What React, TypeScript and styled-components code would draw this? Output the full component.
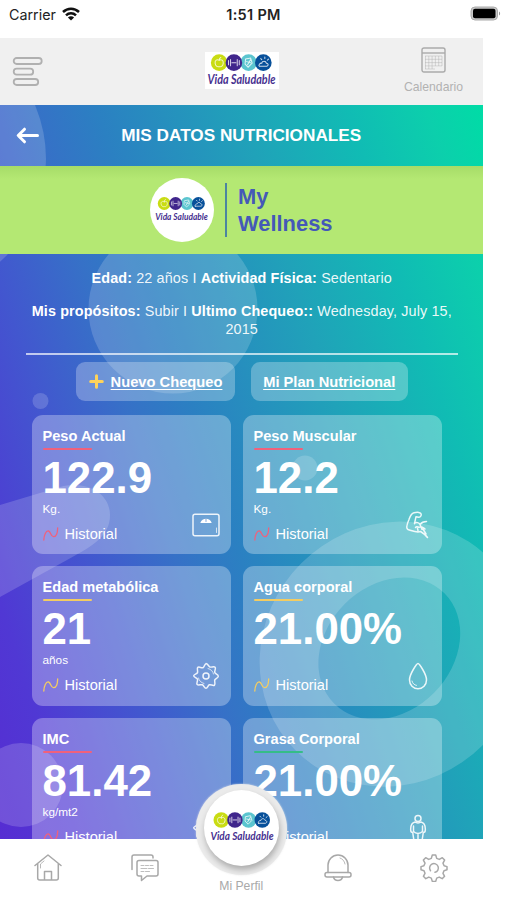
import React from "react";
import styled, { createGlobalStyle } from "styled-components";

const GlobalStyle = createGlobalStyle`
  * { box-sizing: border-box; }
  body { margin: 0; background: #fff; font-family: "Liberation Sans", Arial, sans-serif; }
  svg { display: block; flex: none; }
`;

const Screen = styled.div`
  width: 507px;
  height: 900px;
  overflow: hidden;
  display: flex;
  flex-direction: column;
  background: #fff;
`;

const StatusBar = styled.header`
  height: 38px;
  padding: 0 6px 10px 9px;
  display: grid;
  grid-template-columns: 1fr auto 1fr;
  align-items: center;
  font-family: Inter, "Liberation Sans", sans-serif;
  font-size: 14.3px;
  color: #222;
`;

const Carrier = styled.div`
  display: flex;
  align-items: center;
  gap: 6px;
`;

const Clock = styled.div`
  font-weight: 600;
  font-size: 14.5px;
  letter-spacing: 0.3px;
  margin-right: 3px;
`;

const Battery = styled.div`
  justify-self: end;
  margin-top: -2px;
`;

const AppFrame = styled.div`
  width: 482.5px;
  flex: 1;
  display: flex;
  flex-direction: column;
  min-height: 0;
`;

const TopBar = styled.div`
  height: 67px;
  flex: none;
  background: #f0f0f0;
  display: grid;
  grid-template-columns: 1fr auto 1fr;
  align-items: center;
  padding: 0 19px 0 12px;
`;

const LogoBox = styled.div`
  width: 74px;
  height: 37px;
  margin: -2px 0 0 8px;
  background: #fff;
  display: grid;
  place-items: center;
`;

const CalendarButton = styled.div`
  justify-self: end;
  width: 60px;
  display: flex;
  flex-direction: column;
  align-items: center;
  gap: 6px;
  margin-top: -1px;
  font-size: 12.2px;
  line-height: 16px;
  color: #b2b2b2;
`;

const Content = styled.main`
  position: relative;
  isolation: isolate;
  height: 734px;
  flex: none;
  overflow: hidden;
  display: flex;
  flex-direction: column;
  background: linear-gradient(
    72.3deg,
    #562dd2 0%,
    #5038d4 10.5%,
    #4257cf 25%,
    #3671c7 37%,
    #2b80c2 46%,
    #20a2b9 66%,
    #10bcb4 81%,
    #0ccfac 92%,
    #00dca6 100%
  );
`;

const Backdrop = styled.svg`
  position: absolute;
  inset: 0;
  z-index: -1;
`;

const TitleBar = styled.div`
  height: 61px;
  flex: none;
  display: grid;
  grid-template-columns: 26px 1fr 26px;
  align-items: center;
  padding: 0 15px;
`;

const Title = styled.h1`
  margin: 0;
  text-align: center;
  font-size: 17.2px;
  font-weight: 700;
  color: #fff;
  white-space: nowrap;
`;

const Banner = styled.div`
  height: 88px;
  flex: none;
  display: flex;
  align-items: center;
  padding-left: 149.5px;
  background: linear-gradient(#a6dc68 0, #b4e873 13px, #b4e873 100%);
`;

const RoundLogo = styled.div`
  width: 64px;
  height: 64px;
  border-radius: 50%;
  background: #fff;
  display: grid;
  place-items: center;
`;

const Divider = styled.div`
  width: 1.5px;
  height: 54px;
  margin: 0 11.5px 0 11.5px;
  background: #4c85a0;
`;

const Brand = styled.div`
  width: 110px;
  font-size: 21.9px;
  line-height: 27px;
  font-weight: 700;
  color: #4459b8;
`;

const Info = styled.section`
  height: 100.5px;
  flex: none;
  margin: 0 24.5px 0 25.5px;
  padding-top: 15px;
  border-bottom: 2px solid rgba(255, 255, 255, 0.68);
  text-align: center;
  color: rgba(255, 255, 255, 0.93);
  font-size: 14.4px;
  line-height: 18px;
  white-space: nowrap;
`;

const InfoLine = styled.p`
  margin: 0 0 15px;
  letter-spacing: 0.12px;
  b { color: #fff; }
`;

const Actions = styled.div`
  display: flex;
  gap: 16px;
  padding: 7.5px 0 0 76px;
  height: 60.5px;
  flex: none;
`;

const ActionButton = styled.a<{ $width: number }>`
  width: ${(p) => p.$width}px;
  height: 38.5px;
  border-radius: 9px;
  background: rgba(255, 255, 255, 0.27);
  display: flex;
  align-items: center;
  justify-content: center;
  gap: 7px;
  color: #fff;
  font-size: 14.7px;
  font-weight: 700;
  white-space: nowrap;
`;

const ActionText = styled.span`
  position: relative;
  top: 1px;
  text-decoration: underline;
  text-decoration-thickness: 1px;
  text-underline-offset: 2px;
`;

const Cards = styled.div`
  display: grid;
  grid-template-columns: 199px 199px;
  grid-auto-rows: 139.3px;
  gap: 12.2px 12px;
  padding-left: 31.5px;
`;

const Card = styled.article`
  border-radius: 11px;
  background: rgba(255, 255, 255, 0.3);
  padding: 12px 10px 0 11px;
  color: #fff;
  display: flex;
  flex-direction: column;
`;

const CardTitle = styled.h2`
  margin: 0;
  font-size: 14.6px;
  line-height: 18px;
  font-weight: 700;
  white-space: nowrap;
`;

const Accent = styled.div<{ $color: string }>`
  width: 49px;
  height: 2.4px;
  margin-top: 2.6px;
  flex: none;
  border-radius: 1px;
  background: ${(p) => p.$color};
`;

const Value = styled.div`
  font-size: 43.8px;
  line-height: 50px;
  height: 51px;
  margin-top: 3px;
  font-weight: 700;
`;

const Unit = styled.div`
  font-size: 11.8px;
  line-height: 14px;
  height: 14px;
  margin-top: -2px;
`;

const CardFooter = styled.div`
  display: flex;
  justify-content: space-between;
  align-items: flex-start;
`;

const History = styled.a`
  display: flex;
  align-items: center;
  gap: 6px;
  height: 18px;
  margin-top: 9px;
  font-size: 14.6px;
  line-height: 18px;
`;

const NavBar = styled.nav`
  position: relative;
  height: 61px;
  flex: none;
  display: grid;
  grid-template-columns: repeat(5, 1fr);
  justify-items: center;
  padding-top: 15px;
  background: #fff;
`;

const NavLabel = styled.span`
  align-self: end;
  font-size: 12.2px;
  line-height: 14px;
  padding-bottom: 7px;
  color: #a9a9a9;
`;

const ProfileRing = styled.div`
  position: absolute;
  left: 196px;
  top: -55px;
  width: 91px;
  height: 91px;
  border-radius: 50%;
  background: #ebebeb;
  box-shadow: 0 0 2px rgba(235, 235, 235, 0.9);
  padding: 5.5px 8px;
`;

const ProfileButton = styled.div`
  width: 75px;
  height: 76px;
  border-radius: 50%;
  background: #fff;
  box-shadow: 1px 4px 6px rgba(0, 0, 0, 0.27);
  display: grid;
  place-items: center;
`;

const Logo = ({ width }: { width: number }) => (
  <svg width={width} height={width * 0.5} viewBox="0 0 70 35" overflow="visible">
    <circle cx="13" cy="9.5" r="8.2" fill="#c9dc13" />
    <circle cx="42" cy="9.5" r="8.2" fill="#5bc5cf" />
    <circle cx="27.5" cy="9.5" r="8.2" fill="#40268c" />
    <circle cx="56.5" cy="9.5" r="8.2" fill="#07509a" />
    <g transform="translate(0 .5)" fill="none" stroke="#fff" strokeWidth="1" strokeLinecap="round" opacity="0.8">
      <path d="M13 6.800c-2-1.500-4.500 0-4 2.800.4 2.600 2 4 4 3.400 2 .6 3.800-.8 4-3.400.3-2.800-2-4.300-4-2.800ZM13 6.500c0-1.500.6-2.200 1.600-2.600" />
      <path d="M25.500 9h4M24.200 6v6M22.200 7v4M30.800 6v6M32.800 7v4" />
      <path d="M39 5.500l5-1 1.500 5-4 4-3-3ZM40 8l4 1M41 11l3-5" />
      <path d="M52.500 12.500h7.500c2-.6 1.500-3-.5-3-.6-2.500-4-2.500-4.500 0-2-.2-3.500 2.200-2.500 3ZM55 6l-1-1M58 5V3.500M60.500 6.500l1.200-1" />
    </g>
    <text
      x="1.500"
      y="31"
      fontFamily='"Lato", "Liberation Sans", sans-serif'
      fontStyle="italic"
      fontWeight="700"
      fontSize="12.200"
      fill="#46308f"
      textLength="67"
      lengthAdjust="spacingAndGlyphs"
    >
      Vida Saludable
    </text>
  </svg>
);

const WifiIcon = () => (
  <svg width="18" height="14" viewBox="0 0 18 14" fill="none" stroke="#111" strokeWidth="2.500">
    <path d="M1 5C5.600.6 12.400.6 17 5M4 8.300c2.800-2.700 7.200-2.700 10 0" />
    <path d="M9 13.400 5.900 10.400c1.700-1.600 4.500-1.600 6.200 0Z" fill="#111" stroke="none" />
  </svg>
);

const BatteryIcon = () => (
  <svg width="31" height="15" viewBox="0 0 31 15">
    <rect x="1" y="1" width="26.500" height="13" rx="4" fill="#c9c9c9" stroke="#aaa" strokeWidth="1" />
    <rect x="3" y="2.800" width="22.500" height="9.400" rx="2" fill="#000" />
    <path d="M29 5.500v4c1.500-.5 1.500-3.500 0-4Z" fill="#999" />
  </svg>
);

const MenuIcon = () => (
  <svg width="31" height="30" viewBox="0 0 31 30" fill="none" stroke="#b0b0b0" strokeWidth="1.800">
    <rect x="1.700" y="1" width="28" height="6" rx="3" />
    <rect x="1.700" y="11.700" width="19.500" height="6" rx="3" />
    <rect x="1.700" y="22" width="24.500" height="6" rx="3" />
  </svg>
);

const CalendarIcon = () => (
  <svg width="25" height="26" viewBox="0 0 25 26" fill="none" stroke="#aaa">
    <rect x="1" y="1" width="23" height="24" rx="2" strokeWidth="1.400" />
    <path d="M1 6h23" strokeWidth="1.400" />
    <path d="M4 9h17M4 12.300h17M4 15.600h17M4 18.900h17M4 22h10M4.500 9v13M7.800 9v13M11.100 9v13M14.400 9v10M17.700 9v10M21 9v10" strokeWidth=".6" opacity=".7" />
  </svg>
);

const BackIcon = () => (
  <svg width="26" height="20" viewBox="0 0 26 20" fill="none" stroke="#fff" strokeWidth="3" strokeLinecap="round" strokeLinejoin="round">
    <path d="M22.500 9.500H3.500M9.500 3.200 3.200 9.500l6.300 6.300" />
  </svg>
);

const TrendIcon = ({ color }: { color: string }) => (
  <svg width="16" height="14" viewBox="0 0 16 14" fill="none" stroke={color} strokeWidth="1.300" strokeLinecap="round" strokeLinejoin="round">
    <path d="M.8 13C1 8 3 3.500 5.500 4c2.500.6 2 5.500 5 5.700C13.500 9.900 14.500 6 14.700 1" />
  </svg>
);

const PlusIcon = () => (
  <svg width="15" height="15" viewBox="0 0 15 15" stroke="#ffd35a" strokeWidth="3" strokeLinecap="round">
    <path d="M7.500 1.700v11.600M1.700 7.500h11.600" />
  </svg>
);

type IconName = "scale" | "arm" | "gear" | "drop" | "body";

const GEAR =
  "M14 1.500c1.700 0 2.400 2.900 3.900 3.500s4-.9 5.200.3-.9 3.700-.3 5.200 3.500 2 3.500 3.700-2.900 2.200-3.500 3.700.9 4-.3 5.200-3.700-.9-5.200-.3-1.700 3.500-3.300 3.500-2.100-2.900-3.600-3.500-4 .9-5.200-.3.900-3.700.3-5.200-3.800-1.900-3.800-3.500 3.200-1.700 3.800-3.200-.9-4 .3-5.200 3.700.9 5.200.3 1.400-3.700 3-3.700Z";

const CardIcon = ({ name }: { name: IconName }) => (
  <svg width="28" height="28" viewBox="0 0 28 28" fill="none" stroke="#fff" strokeOpacity=".88" strokeWidth="1.500" strokeLinecap="round" strokeLinejoin="round">
    {name === "scale" && (
      <>
        <rect x="1" y="3.300" width="26" height="21.500" rx="2" />
        <path d="M8.300 12c1.800-5.600 9.600-5.600 11.400 0Z" fill="#fff" stroke="none" />
        <path d="M14 8v2.500" stroke="#759bd5" strokeWidth="1" />
        <path d="M24.500 17v4.500" strokeWidth=".8" />
      </>
    )}
    {name === "arm" && (
      <path d="M24.500 26.500c-1.800-3-4.500-4.500-7-6-4 1.500-7.500-.5-12.500-2C2.800 17.500 4 13 6 8.500 7.200 5 8 2.300 11 1.700c3.500-.7 6.800-.6 7.200 1.500.3 2-1.200 3-2.700 3l-2.500-.5-1.500 7M11.500 12c2-1 4.500-.5 5.500 1.500 1.500-2 3.500-3 6.500-3M12.500 16.500c1.500-2 3 .5 4.500-.5s3 .5 5 2M17 13.500l2 5M15 19.500l-.5-2M20 18l3 5" strokeWidth="1.500" />
    )}
    {name === "gear" && (
      <>
        <path d={GEAR} />
        <circle cx="14" cy="14" r="3" />
        <path d="M16 6.500c3 .8 5 2.800 5.500 5.500M12 21.500c-3-.8-5-2.800-5.500-5.500" strokeWidth=".8" />
      </>
    )}
    {name === "drop" && (
      <>
        <path d="M14 1.500c1.200 0 8.500 10.500 8.500 16.500a8.500 8.800 0 0 1-17 0C5.500 12 12.800 1.500 14 1.500Z" />
        <path d="M8 19c.6 2.500 2.200 4 4.500 4.400" strokeWidth=".9" />
      </>
    )}
    {name === "body" && (
      <>
        <circle cx="14" cy="4.500" r="3" />
        <path d="M11 8c-4 1-4.500 4-4.300 8 0 2 1 2.500 2 2.500L10 27M17 8c4 1 4.500 4 4.300 8 0 2-1 2.500-2 2.500L18 27M9.500 12v5.500c2.500 2.500 6.500 2.500 9 0V12M14 20v7M11 8c1.500 1.300 4.500 1.300 6 0" />
      </>
    )}
  </svg>
);

const CardIconSlot = styled.div<{ $push: number }>`
  margin: -5px ${(p) => p.$push}px 0 0;
`;

const navStroke = { fill: "none", stroke: "#a8a8a8", strokeWidth: 1.5, strokeLinecap: "round", strokeLinejoin: "round" } as const;

const HomeIcon = () => (
  <svg width="28" height="28" viewBox="0 0 28 28" {...navStroke}>
    <path d="M1 11.500 14 1l13 10.500M3.700 9.500V24c0 1.300.7 2 2 2h16.600c1.300 0 2-.7 2-2V9.500M10.500 26v-8.500h7V26" />
    <path d="M6.500 14v-4L10 7" strokeWidth=".8" />
  </svg>
);

const ChatIcon = () => (
  <svg width="28" height="28" viewBox="0 0 28 28" {...navStroke}>
    <path d="M1 15.500V3c0-1.300.7-2 2-2h17c1.300 0 2 .7 2 2v1" />
    <path d="M8 6.500h17c1.300 0 2 .7 2 2V20c0 1.300-.7 2-2 2h-9l-5.500 4.500V22H8c-1.300 0-2-.7-2-2V8.500c0-1.300.7-2 2-2Z" />
    <path d="M10 11.500h3m1.500 0h3m1.500 0h3M10 14.500h6m1.500 0h5M10 17.500h3m1.500 0h4" strokeWidth="1" opacity=".75" />
  </svg>
);

const BellIcon = () => (
  <svg width="28" height="28" viewBox="0 0 28 28" {...navStroke}>
    <path d="M4 18.500V11C4 5.500 8.500 1 14 1s10 4.500 10 10v7.500" />
    <rect x="1" y="18.500" width="26" height="4.500" rx="2" />
    <path d="M9.500 23c.4 2 1.900 3.500 4.500 3.500s4.100-1.500 4.500-3.500" />
    <path d="M16 4c2.500.8 4.500 3 5 6" strokeWidth=".8" />
  </svg>
);

const SettingsIcon = () => (
  <svg width="28" height="28" viewBox="0 0 28 28" {...navStroke}>
    <path d="M12.300 1h3.400l1 3.400 2.600 1 3-1.700 2.300 2.400-1.600 3.100 1.100 2.600 2.900.8v3.200l-3 .9-1 2.600 1.600 3-2.400 2.400-3-1.600-2.500 1-1 3.300h-3.400l-1-3.300-2.500-1-3 1.600-2.400-2.400 1.600-3-1-2.600-3-.9v-3.200l2.900-.8 1.100-2.600-1.600-3.100L5.700 3.700l3 1.700 2.600-1Z" />
    <path d="M10.500 16.700a4.400 4.400 0 1 1 4.500 1.600" />
  </svg>
);

const RED = "#f0617c";
const YELLOW = "#f3cc62";
const GREEN = "#35bd87";

const metrics: { title: string; value: string; unit: string; color: string; icon: IconName; push: number }[] = [
  { title: "Peso Actual", value: "122.9", unit: "Kg.", color: RED, icon: "scale", push: 1 },
  { title: "Peso Muscular", value: "12.2", unit: "Kg.", color: RED, icon: "arm", push: 1 },
  { title: "Edad metabólica", value: "21", unit: "años", color: YELLOW, icon: "gear", push: 1 },
  { title: "Agua corporal", value: "21.00%", unit: "", color: YELLOW, icon: "drop", push: 0 },
  { title: "IMC", value: "81.42", unit: "kg/mt2", color: RED, icon: "gear", push: 1 },
  { title: "Grasa Corporal", value: "21.00%", unit: "", color: GREEN, icon: "body", push: 0 },
];

const Shapes = () => (
  <Backdrop width="483" height="734" viewBox="0 105 483 734" fill="#fff" fillOpacity=".17">
    <circle cx="-92" cy="159" r="138" />
    <circle cx="173" cy="309" r="84.500" />
    <circle cx="40.500" cy="401" r="8" />
    <circle cx="305" cy="468" r="12.500" />
    <path d="M0 505 60 487C86 480 110 493 110 515c0 20-15 30-43 45L0 597Z" />
    <circle cx="21" cy="785" r="42" />
    <path
      fillRule="evenodd"
      transform="rotate(-45 390 652)"
      d="M253.600 655a136.400 128.500 0 1 0 272.800 0a136.400 128.500 0 1 0-272.800 0ZM314 649a78 63 0 1 0 156 0a78 63 0 1 0-156 0Z"
    />
  </Backdrop>
);

export default function App() {
  return (
    <Screen>
      <GlobalStyle />
      <StatusBar>
        <Carrier>
          Carrier
          <WifiIcon />
        </Carrier>
        <Clock>1:51 PM</Clock>
        <Battery>
          <BatteryIcon />
        </Battery>
      </StatusBar>
      <AppFrame>
        <TopBar>
          <MenuIcon />
          <LogoBox>
            <Logo width={71} />
          </LogoBox>
          <CalendarButton>
            <CalendarIcon />
            Calendario
          </CalendarButton>
        </TopBar>
        <Content>
          <Shapes />
          <TitleBar>
            <BackIcon />
            <Title>MIS DATOS NUTRICIONALES</Title>
          </TitleBar>
          <Banner>
            <RoundLogo>
              <Logo width={55} />
            </RoundLogo>
            <Divider />
            <Brand>My Wellness</Brand>
          </Banner>
          <Info>
            <InfoLine>
              <b>Edad:</b> 22 años I <b>Actividad Física:</b> Sedentario
            </InfoLine>
            <InfoLine>
              <b>Mis propósitos:</b> Subir I <b>Ultimo Chequeo::</b> Wednesday, July 15,
              <br />
              2015
            </InfoLine>
          </Info>
          <Actions>
            <ActionButton $width={159}>
              <PlusIcon />
              <ActionText>Nuevo Chequeo</ActionText>
            </ActionButton>
            <ActionButton $width={156.5}>
              <ActionText>Mi Plan Nutricional</ActionText>
            </ActionButton>
          </Actions>
          <Cards>
            {metrics.map((m) => (
              <Card key={m.title}>
                <CardTitle>{m.title}</CardTitle>
                <Accent $color={m.color} />
                <Value>{m.value}</Value>
                <Unit>{m.unit}</Unit>
                <CardFooter>
                  <History>
                    <TrendIcon color={m.color} />
                    Historial
                  </History>
                  <CardIconSlot $push={m.push}>
                    <CardIcon name={m.icon} />
                  </CardIconSlot>
                </CardFooter>
              </Card>
            ))}
          </Cards>
        </Content>
        <NavBar>
          <HomeIcon />
          <ChatIcon />
          <NavLabel>Mi Perfil</NavLabel>
          <BellIcon />
          <SettingsIcon />
          <ProfileRing>
            <ProfileButton>
              <Logo width={66} />
            </ProfileButton>
          </ProfileRing>
        </NavBar>
      </AppFrame>
    </Screen>
  );
}
